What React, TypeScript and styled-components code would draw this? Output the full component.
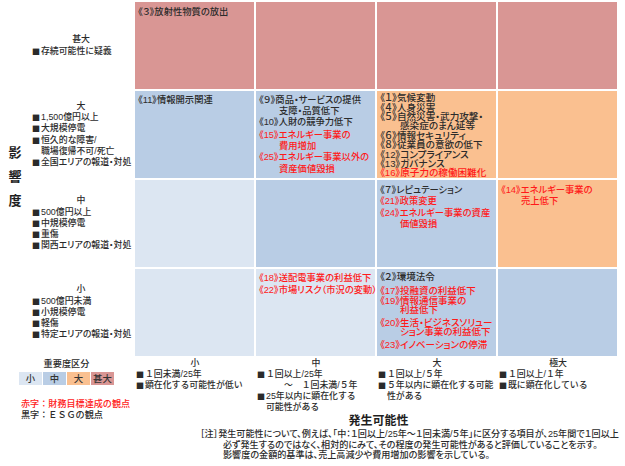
import React from "react";
import styled, { createGlobalStyle } from "styled-components";

const Global = createGlobalStyle`
  html, body { margin: 0; padding: 0; background: #ffffff; }
  body {
    width: 625px;
    height: 466px;
    overflow: hidden;
    font-family: "Liberation Sans", "Noto Sans CJK JP", sans-serif;
    color: #2b2b2b;
  }
`;

const C = {
  pink: "#D99694",
  blue: "#B9CDE5",
  light: "#DCE6F2",
  orange: "#FAC090",
  red: "#FF1A1A",
  ink: "#2b2b2b",
};

const Page = styled.div`
  width: 625px;
  height: 466px;
  display: flex;
  flex-direction: column;
`;

const Top = styled.div`
  display: flex;
  padding-top: 2px;
`;

const YTitle = styled.div`
  width: 28px;
  display: flex;
  flex-direction: column;
  align-items: center;
  justify-content: center;
  padding: 0 0 6px 2px;
  box-sizing: border-box;
  font-family: "Noto Sans CJK JP", sans-serif;
  font-weight: 700;
  font-size: 13px;
  line-height: 24px;
  color: #1f1f1f;
`;

const RowLabels = styled.div`
  width: 107px;
  display: flex;
  flex-direction: column;
  gap: 2px;
`;

const LabelBox = styled.div`
  height: 87px;
  display: flex;
  flex-direction: column;
  justify-content: center;
  padding: 0 5px 0 4px;
  box-sizing: border-box;
  font-size: 8.9px;
  line-height: 11.3px;
  font-weight: 500;
  font-feature-settings: "palt";
  white-space: nowrap;
`;

const LabelHead = styled.div`
  text-align: center;
`;

const LabelLine = styled.div`
  padding-left: 9px;
  text-indent: -9px;
`;

const Bullet = styled.span`
  font-family: "DejaVu Sans", sans-serif;
  font-size: 0.95em;
  margin-right: 1px;
`;

const Matrix = styled.div`
  display: grid;
  grid-template-columns: repeat(4, 119px);
  grid-auto-rows: 87px;
  gap: 2px;
`;

const Cell = styled.div<{ $bg: string; $lh?: number; $pt?: number; $fs?: number }>`
  background: ${(p) => p.$bg};
  padding: ${(p) => p.$pt ?? 3.5}px 2px 0 3px;
  box-sizing: border-box;
  font-size: ${(p) => p.$fs ?? 9.3}px;
  line-height: ${(p) => p.$lh ?? 11.3}px;
  font-weight: 500;
  font-feature-settings: "palt";
  white-space: nowrap;
`;

const Item = styled.div<{ $red?: boolean; $mt?: number }>`
  color: ${(p) => (p.$red ? C.red : C.ink)};
  margin-top: ${(p) => p.$mt ?? 0}px;
  padding-left: 20px;
  text-indent: -20px;
`;

const Bottom = styled.div`
  display: flex;
`;

const Legend = styled.div`
  width: 135px;
  padding: 2px 0 0 19px;
  box-sizing: border-box;
  display: flex;
  flex-direction: column;
`;

const LegendTitle = styled.div`
  width: 95px;
  text-align: center;
  font-size: 9.2px;
  line-height: 13px;
  font-weight: 500;
`;

const Swatches = styled.div`
  display: flex;
  gap: 1px;
  margin-top: 1px;
`;

const Swatch = styled.div<{ $bg: string }>`
  width: 23px;
  height: 13px;
  background: ${(p) => p.$bg};
  font-size: 9.4px;
  line-height: 13px;
  text-align: center;
  color: #333;
  font-weight: 500;
`;

const LegendNote = styled.div<{ $red?: boolean; $mt?: number }>`
  color: ${(p) => (p.$red ? C.red : C.ink)};
  margin: ${(p) => p.$mt ?? 0}px 0 0 2px;
  font-size: 9.1px;
  line-height: 11.4px;
  font-weight: 500;
  white-space: nowrap;
`;

const Right = styled.div`
  width: 482px;
  display: flex;
  flex-direction: column;
`;

const ColHeads = styled.div`
  display: grid;
  grid-template-columns: repeat(4, 119px);
  gap: 2px;
  padding-top: 1.5px;
  height: 56.5px;
  box-sizing: border-box;
`;

const ColHead = styled.div`
  font-size: 8.9px;
  line-height: 11px;
  font-weight: 500;
  white-space: nowrap;
  padding-left: 1px;
`;

const ColTitle = styled.div`
  text-align: center;
`;

const ColLine = styled.div<{ $pad?: number }>`
  padding-left: ${(p) => p.$pad ?? 9}px;
  text-indent: ${(p) => (p.$pad === undefined ? -9 : 0)}px;
`;

const XTitle = styled.div`
  text-align: center;
  font-family: "Noto Sans CJK JP", sans-serif;
  font-weight: 700;
  font-size: 12px;
  line-height: 14px;
  color: #1f1f1f;
  padding-left: 5px;
`;

const Note = styled.div`
  padding: 2.5px 0 0 200px;
  font-size: 9.1px;
  line-height: 10.6px;
  font-weight: 500;
  font-feature-settings: "palt";
  white-space: nowrap;
  color: #2b2b2b;
`;

const NoteLine = styled.div<{ $indent?: boolean }>`
  padding-left: ${(p) => (p.$indent ? 23 : 0)}px;
`;

const labels = [
  { head: "甚大", lines: ["存続可能性に疑義"] },
  {
    head: "大",
    lines: ["1,500億円以上", "大規模停電", "恒久的な障害/\n職場復帰不可/死亡", "全国エリアの報道・対処"],
  },
  { head: "中", lines: ["500億円以上", "中規模停電", "重傷", "関西エリアの報道・対処"] },
  { head: "小", lines: ["500億円未満", "小規模停電", "軽傷", "特定エリアの報道・対処"] },
];

const Br = () => <br />;
const B = () => <Bullet>■</Bullet>;

export default function App() {
  return (
    <Page>
      <Global />
      <Top>
        <YTitle>
          <span>影</span>
          <span>響</span>
          <span>度</span>
        </YTitle>
        <RowLabels>
          {labels.map((l) => (
            <LabelBox key={l.head}>
              <LabelHead>{l.head}</LabelHead>
              {l.lines.map((t) => (
                <LabelLine key={t}>
                  <B />
                  {t.split("\n").map((s, i) => (
                    <React.Fragment key={s}>
                      {i > 0 && <Br />}
                      {s}
                    </React.Fragment>
                  ))}
                </LabelLine>
              ))}
            </LabelBox>
          ))}
        </RowLabels>
        <Matrix>
          {/* 甚大 */}
          <Cell $bg={C.pink} $pt={4.5}>
            <Item>《３》放射性物質の放出</Item>
          </Cell>
          <Cell $bg={C.pink} />
          <Cell $bg={C.pink} />
          <Cell $bg={C.pink} />
          {/* 大 */}
          <Cell $bg={C.blue}>
            <Item>《11》情報開示関連</Item>
          </Cell>
          <Cell $bg={C.blue}>
            <Item>
              《９》商品・サービスの提供
              <Br />
              支障・品質低下
            </Item>
            <Item>《10》人財の競争力低下</Item>
            <Item $red $mt={1.5}>
              《15》エネルギー事業の
              <Br />
              費用増加
            </Item>
            <Item $red>
              《25》エネルギー事業以外の
              <Br />
              資産価値毀損
            </Item>
          </Cell>
          <Cell $bg={C.orange} $lh={9.4} $pt={2.2} $fs={9.6}>
            <Item>《１》気候変動</Item>
            <Item>《４》人身災害</Item>
            <Item>
              《５》自然災害・武力攻撃・
              <Br />
              感染症のまん延等
            </Item>
            <Item>《６》情報セキュリティ</Item>
            <Item>《８》従業員の意欲の低下</Item>
            <Item>《12》コンプライアンス</Item>
            <Item>《13》ガバナンス</Item>
            <Item $red>《16》原子力の稼働困難化</Item>
          </Cell>
          <Cell $bg={C.orange} />
          {/* 中 */}
          <Cell $bg={C.light} />
          <Cell $bg={C.blue} />
          <Cell $bg={C.blue} $pt={5}>
            <Item>《７》レピュテーション</Item>
            <Item $red>《21》政策変更</Item>
            <Item $red>
              《24》エネルギー事業の資産
              <Br />
              価値毀損
            </Item>
          </Cell>
          <Cell $bg={C.orange} $pt={5}>
            <Item $red>
              《14》エネルギー事業の
              <Br />
              売上低下
            </Item>
          </Cell>
          {/* 小 */}
          <Cell $bg={C.light} />
          <Cell $bg={C.light} $pt={3.8} $lh={11}>
            <Item $red>《18》送配電事業の利益低下</Item>
            <Item $red $mt={1.7}>
              《22》市場リスク（市況の変動）
            </Item>
          </Cell>
          <Cell $bg={C.blue} $lh={9.4} $pt={3} $fs={9.5}>
            <Item>《２》環境法令</Item>
            <Item $red $mt={4.2}>
              《17》投融資の利益低下
            </Item>
            <Item $red $mt={1}>
              《19》情報通信事業の
              <Br />
              利益低下
            </Item>
            <Item $red $mt={3}>
              《20》生活・ビジネスソリュー
              <Br />
              ション事業の利益低下
            </Item>
            <Item $red $mt={3.8}>
              《23》イノベーションの停滞
            </Item>
          </Cell>
          <Cell $bg={C.blue} />
        </Matrix>
      </Top>
      <Bottom>
        <Legend>
          <LegendTitle>重要度区分</LegendTitle>
          <Swatches>
            <Swatch $bg={C.light}>小</Swatch>
            <Swatch $bg={C.blue}>中</Swatch>
            <Swatch $bg={C.orange}>大</Swatch>
            <Swatch $bg={C.pink}>甚大</Swatch>
          </Swatches>
          <LegendNote $red $mt={14}>
            赤字：財務目標達成の観点
          </LegendNote>
          <LegendNote>黒字：ＥＳＧの観点</LegendNote>
        </Legend>
        <Right>
          <ColHeads>
            <ColHead>
              <ColTitle>小</ColTitle>
              <ColLine>
                <B />１回未満/25年
              </ColLine>
              <ColLine>
                <B />顕在化する可能性が低い
              </ColLine>
            </ColHead>
            <ColHead>
              <ColTitle>中</ColTitle>
              <ColLine>
                <B />１回以上/25年
              </ColLine>
              <ColLine $pad={27}>～　１回未満/５年</ColLine>
              <ColLine>
                <B />25年以内に顕在化する
                <Br />
                可能性がある
              </ColLine>
            </ColHead>
            <ColHead>
              <ColTitle>大</ColTitle>
              <ColLine>
                <B />１回以上/５年
              </ColLine>
              <ColLine>
                <B />５年以内に顕在化する可能
                <Br />
                性がある
              </ColLine>
            </ColHead>
            <ColHead>
              <ColTitle>極大</ColTitle>
              <ColLine>
                <B />１回以上/１年
              </ColLine>
              <ColLine>
                <B />既に顕在化している
              </ColLine>
            </ColHead>
          </ColHeads>
          <XTitle>発生可能性</XTitle>
        </Right>
      </Bottom>
      <Note>
        <NoteLine>
          ［注］発生可能性について、例えば、「中：１回以上/25年～１回未満/５年」に区分する項目が、25年間で１回以上
        </NoteLine>
        <NoteLine $indent>
          必ず発生するのではなく、相対的にみて、その程度の発生可能性があると評価していることを示す。
        </NoteLine>
        <NoteLine $indent>影響度の金額的基準は、売上高減少や費用増加の影響を示している。</NoteLine>
      </Note>
    </Page>
  );
}
